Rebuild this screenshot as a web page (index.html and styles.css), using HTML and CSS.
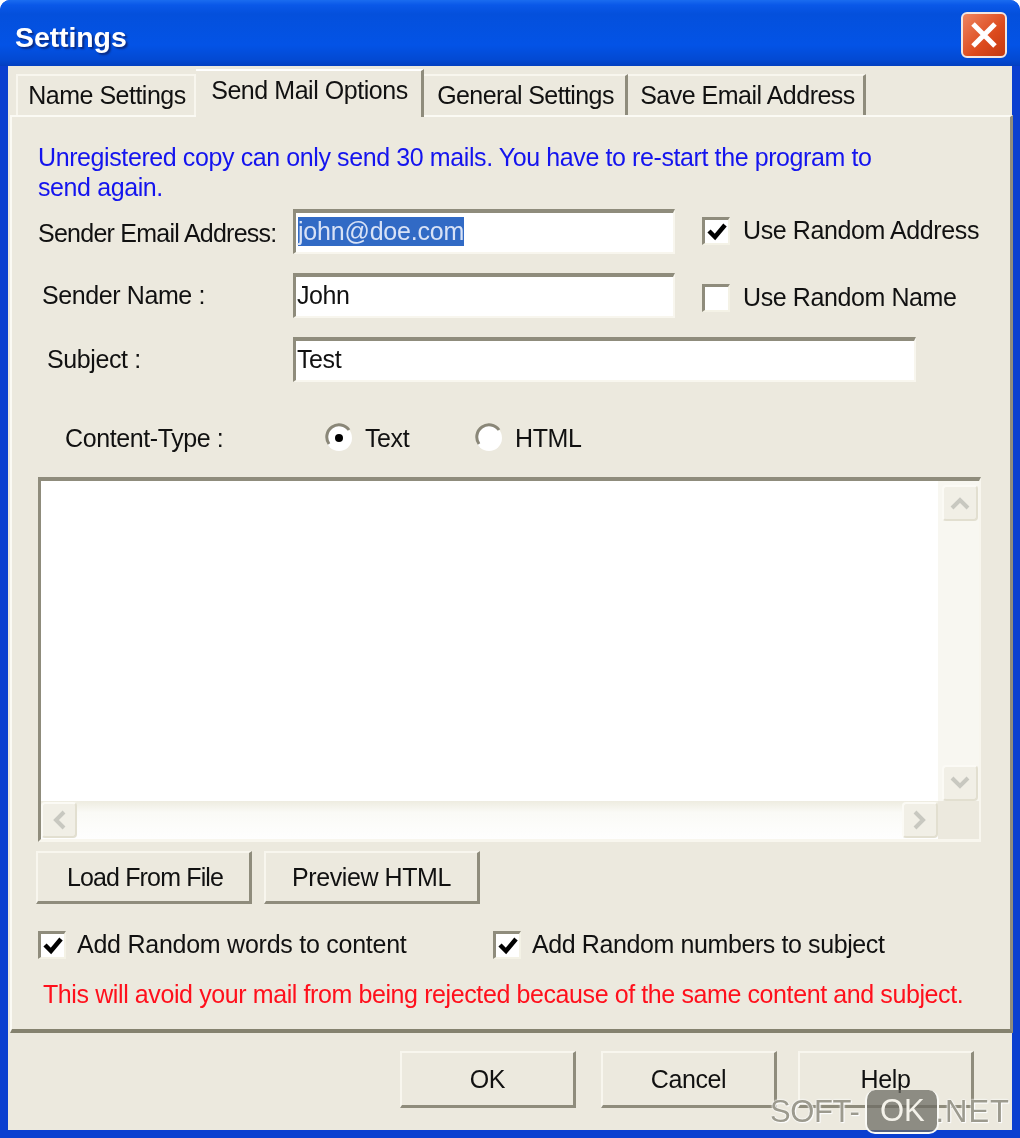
FILE: index.html
```html
<!DOCTYPE html>
<html lang="en">
<head>
  <meta charset="UTF-8">
  <title>Settings</title>
  <link rel="stylesheet" href="styles.css">
</head>
<body>

<div class="janela">
  <div class="titulo">
    <span class="titulo-texto">Settings</span>
    <div class="fechar">
      <svg width="30" height="30" viewBox="0 0 30 30"><path d="M4 4 L26 26 M26 4 L4 26" stroke="#fff" stroke-width="5" fill="none"/></svg>
    </div>
  </div>

  <div class="conteudo">
    <div class="abas">
      <div class="aba aba-nome">Name Settings</div>
      <div class="aba aba-ativa">Send Mail Options</div>
      <div class="aba aba-geral">General Settings</div>
      <div class="aba aba-email">Save Email Address</div>
    </div>

    <div class="painel">
      <p class="aviso">Unregistered copy can only send 30 mails. You have to re-start the program to<br>send again.</p>

      <div class="linha linha-email">
        <span class="rotulo rotulo-email">Sender Email Address:</span>
        <div class="campo campo-curto"><span class="selecao">john@doe.com</span></div>
        <div class="opcao">
          <div class="caixa"><svg width="22" height="22" viewBox="0 0 22 22"><path d="M3 11 L9 17 L19 5" stroke="#000" stroke-width="4.5" fill="none"/></svg></div>
          <span>Use Random Address</span>
        </div>
      </div>

      <div class="linha linha-nome">
        <span class="rotulo rotulo-nome">Sender Name :</span>
        <div class="campo campo-curto">John</div>
        <div class="opcao">
          <div class="caixa"></div>
          <span>Use Random Name</span>
        </div>
      </div>

      <div class="linha linha-assunto">
        <span class="rotulo rotulo-assunto">Subject :</span>
        <div class="campo campo-longo">Test</div>
      </div>

      <div class="tipo">
        <span class="rotulo-tipo">Content-Type :</span>
        <div class="radio-item radio-texto">
          <svg width="30" height="30" viewBox="0 0 30 30"><circle cx="15" cy="15" r="13" fill="#fff"/><path d="M5 21 A12 12 0 0 1 25 7" stroke="#8a8778" stroke-width="3" fill="none"/><circle cx="15" cy="15" r="4" fill="#000"/></svg>
          <span>Text</span>
        </div>
        <div class="radio-item">
          <svg width="30" height="30" viewBox="0 0 30 30"><circle cx="15" cy="15" r="13" fill="#fff"/><path d="M5 21 A12 12 0 0 1 25 7" stroke="#8a8778" stroke-width="3" fill="none"/></svg>
          <span>HTML</span>
        </div>
      </div>

      <div class="area">
        <div class="area-texto"></div>
        <div class="barra-v">
          <div class="seta"><svg width="22" height="14" viewBox="0 0 22 14"><path d="M3 12 L11 4 L19 12" stroke="#c8c8c0" stroke-width="4" fill="none"/></svg></div>
          <div class="seta"><svg width="22" height="14" viewBox="0 0 22 14"><path d="M3 2 L11 10 L19 2" stroke="#c8c8c0" stroke-width="4" fill="none"/></svg></div>
        </div>
        <div class="barra-h">
          <div class="seta"><svg width="14" height="22" viewBox="0 0 14 22"><path d="M12 3 L4 11 L12 19" stroke="#c8c8c0" stroke-width="4" fill="none"/></svg></div>
          <div class="seta"><svg width="14" height="22" viewBox="0 0 14 22"><path d="M2 3 L10 11 L2 19" stroke="#c8c8c0" stroke-width="4" fill="none"/></svg></div>
        </div>
        <div class="canto"></div>
      </div>

      <div class="botoes-area">
        <div class="botao botao-area botao-carregar">Load From File</div>
        <div class="botao botao-area">Preview HTML</div>
      </div>

      <div class="extras">
        <div class="opcao opcao-palavras">
          <div class="caixa"><svg width="22" height="22" viewBox="0 0 22 22"><path d="M3 11 L9 17 L19 5" stroke="#000" stroke-width="4.5" fill="none"/></svg></div>
          <span>Add Random words to content</span>
        </div>
        <div class="opcao">
          <div class="caixa"><svg width="22" height="22" viewBox="0 0 22 22"><path d="M3 11 L9 17 L19 5" stroke="#000" stroke-width="4.5" fill="none"/></svg></div>
          <span>Add Random numbers to subject</span>
        </div>
      </div>

      <p class="alerta">This will avoid your mail from being rejected because of the same content and subject.</p>
    </div>

    <div class="rodape">
      <div class="botao botao-rodape botao-ok">OK</div>
      <div class="botao botao-rodape">Cancel</div>
      <div class="botao botao-rodape">Help</div>
    </div>
  </div>

  <div class="marca">
    <span class="marca-soft">SOFT-</span><span class="marca-ok">OK</span><span class="marca-net">.NET</span>
  </div>
</div>

</body>
</html>
```

FILE: styles.css
```css
* {
  box-sizing: border-box;
}

body {
  margin: 0;
  background: #fff;
  font-family: "Liberation Sans", Arial, sans-serif;
  font-size: 25px;
  letter-spacing: -0.4px;
  color: #111;
  white-space: nowrap;
}

p {
  margin: 0;
}

.janela {
  position: relative;
  width: 1020px;
  height: 1138px;
  display: flex;
  flex-direction: column;
  padding: 0 8px 8px 8px;
  background: #0a3fd0;
  border-radius: 10px 10px 0 0;
  filter: blur(0.6px);
}

.titulo {
  height: 66px;
  margin: 0 -8px;
  padding: 4px 13px 0 15px;
  display: flex;
  align-items: center;
  justify-content: space-between;
  border-radius: 10px 10px 0 0;
  background: linear-gradient(#1a6cf0 0, #0a58e8 5px, #0450dc 14px, #0353e6 45px, #0349d2 60px, #0340c0 66px);
}

.titulo-texto {
  margin-top: 4px;
  font-size: 28.5px;
  font-weight: bold;
  letter-spacing: -0.1px;
  color: #fff;
  text-shadow: 2px 2px 2px #0a2a80;
}

.fechar {
  width: 46px;
  height: 46px;
  display: flex;
  align-items: center;
  justify-content: center;
  border: 2px solid #f2e6e0;
  border-radius: 6px;
  background: linear-gradient(135deg, #ee8460, #dc4a1c 60%, #c23a12);
}

.conteudo {
  flex: 1;
  display: flex;
  flex-direction: column;
  background: #ece9de;
}

.abas {
  height: 49px;
  padding: 2px 0 0 8px;
  display: flex;
  align-items: flex-end;
}

.aba {
  height: 41px;
  padding-top: 5px;
  text-align: center;
  background: #ece9de;
  border-top: 2px solid #f8f6ee;
  border-right: 3px solid #8f8c7c;
}

.aba-nome {
  width: 180px;
  padding-left: 2px;
  letter-spacing: -0.5px;
  border-left: 2px solid #f8f6ee;
  border-right: 2px solid #f8f6ee;
}

.aba-ativa {
  width: 228px;
  height: 48px;
  padding-top: 5px;
  padding-left: 2px;
  margin-bottom: -2px;
  letter-spacing: -0.45px;
  border-top: 2px solid #fff;
  position: relative;
}

.aba-geral {
  width: 204px;
  padding-left: 2px;
  letter-spacing: -0.6px;
}

.aba-email {
  width: 238px;
  padding-left: 4px;
  letter-spacing: -0.5px;
}

.painel {
  height: 918px;
  padding: 0 0 0 26px;
  border-top: 2px solid #fbfaf4;
  border-left: 2px solid #fbfaf4;
  border-right: 3px solid #8f8c7c;
  border-bottom: 4px solid #85826f;
  margin-left: 2px;
  margin-right: -1px;
}

.aviso {
  padding-top: 25px;
  line-height: 30px;
  color: #1414ee;
}

.linha {
  display: flex;
  align-items: center;
  height: 45px;
}

.linha-email {
  margin-top: 7px;
}

.linha-nome,
.linha-assunto {
  margin-top: 19px;
}

.rotulo {
  width: 255px;
  flex-shrink: 0;
}

.rotulo-email {
  padding-top: 3px;
  letter-spacing: -0.75px;
}

.rotulo-nome {
  padding-left: 4px;
}

.rotulo-assunto {
  padding-left: 9px;
}

.campo {
  height: 45px;
  padding: 2px 0 0 1px;
  line-height: 33px;
  background: #fff;
  border-top: 4px solid #8f8c7c;
  border-left: 3px solid #8f8c7c;
  border-right: 2px solid #f8f6ee;
  border-bottom: 2px solid #f8f6ee;
}

.campo-curto {
  width: 382px;
}

.campo-longo {
  width: 623px;
}

.selecao {
  display: inline-block;
  margin-left: 1px;
  line-height: 29px;
  letter-spacing: -0.2px;
  background: #316ac5;
  color: #d8e2f6;
}

.opcao {
  display: flex;
  align-items: center;
  gap: 13px;
}

.linha .opcao {
  margin-left: 27px;
}

.linha-email .opcao {
  padding-bottom: 2px;
}

.linha-nome .opcao {
  padding-top: 4px;
}

.caixa {
  width: 28px;
  height: 28px;
  display: flex;
  align-items: center;
  justify-content: center;
  background: #fff;
  border-top: 3px solid #8f8c7c;
  border-left: 3px solid #8f8c7c;
  border-right: 2px solid #f4f2e6;
  border-bottom: 2px solid #f4f2e6;
}

.tipo {
  display: flex;
  align-items: center;
  height: 32px;
  margin-top: 40px;
}

.rotulo-tipo {
  width: 286px;
  padding-left: 27px;
}

.radio-item {
  display: flex;
  align-items: center;
  gap: 11px;
}

.radio-texto {
  width: 150px;
}

.area {
  width: 943px;
  height: 365px;
  margin-top: 23px;
  display: grid;
  grid-template-columns: 1fr 41px;
  grid-template-rows: 1fr 38px;
  border-top: 4px solid #8f8c7c;
  border-left: 3px solid #8f8c7c;
  border-right: 2px solid #f8f6ee;
  border-bottom: 3px solid #f8f6ee;
}

.area-texto {
  background: #fff;
}

.barra-v {
  padding: 4px 0 0 2px;
  display: flex;
  flex-direction: column;
  justify-content: space-between;
  align-items: center;
  background: #f8f7f1;
}

.barra-h {
  display: flex;
  justify-content: space-between;
  align-items: center;
  background: linear-gradient(#eeece0, #fafaf6 30%, #fefefe);
}

.canto {
  background: #ece9de;
}

.seta {
  width: 36px;
  height: 36px;
  display: flex;
  align-items: center;
  justify-content: center;
  background: #f1efe6;
  border: 2px solid #fbfaf5;
  border-right-color: #e2dfd0;
  border-bottom-color: #e2dfd0;
  border-radius: 4px;
}

.botoes-area {
  display: flex;
  gap: 12px;
  margin-top: 9px;
  margin-left: -2px;
}

.botao {
  display: flex;
  align-items: center;
  justify-content: center;
  background: #ece9de;
  border-top: 2px solid #f8f6ee;
  border-left: 2px solid #f8f6ee;
  border-right: 3px solid #8f8c7c;
  border-bottom: 3px solid #8f8c7c;
}

.botao-area {
  width: 216px;
  height: 53px;
}

.botao-carregar {
  padding-left: 3px;
  letter-spacing: -0.85px;
}

.extras {
  display: flex;
  margin-top: 26px;
}

.extras .opcao {
  gap: 11px;
}

.opcao-palavras {
  width: 455px;
  letter-spacing: -0.25px;
}

.alerta {
  margin-top: 19px;
  padding-left: 5px;
  line-height: 32px;
  color: #ff101c;
}

.rodape {
  flex: 1;
  padding: 18px 38px 0 0;
  display: flex;
  justify-content: flex-end;
  align-items: flex-start;
  gap: 21px;
}

.botao-rodape {
  width: 176px;
  height: 57px;
}

.botao-ok {
  margin-right: 4px;
}

/* marca d'agua por cima da janela */
.marca {
  position: absolute;
  right: 10px;
  bottom: 4px;
  display: flex;
  align-items: center;
  font-size: 31px;
  letter-spacing: 0;
  color: #9c9a8e;
  text-shadow: 0 0 2px #fff, 0 0 2px #fff, 1px 1px 1px #fff;
}

.marca-soft {
  letter-spacing: -0.4px;
}

.marca-net {
  margin-left: -4px;
  letter-spacing: 1px;
}

.marca-ok {
  width: 74px;
  height: 44px;
  margin: 0 0 0 6px;
  text-align: center;
  line-height: 42px;
  color: #f4f2ea;
  text-shadow: none;
  background: rgba(110, 108, 100, 0.75);
  border: 2px solid #fafaf6;
  border-top: none;
  border-radius: 10px;
}
```
